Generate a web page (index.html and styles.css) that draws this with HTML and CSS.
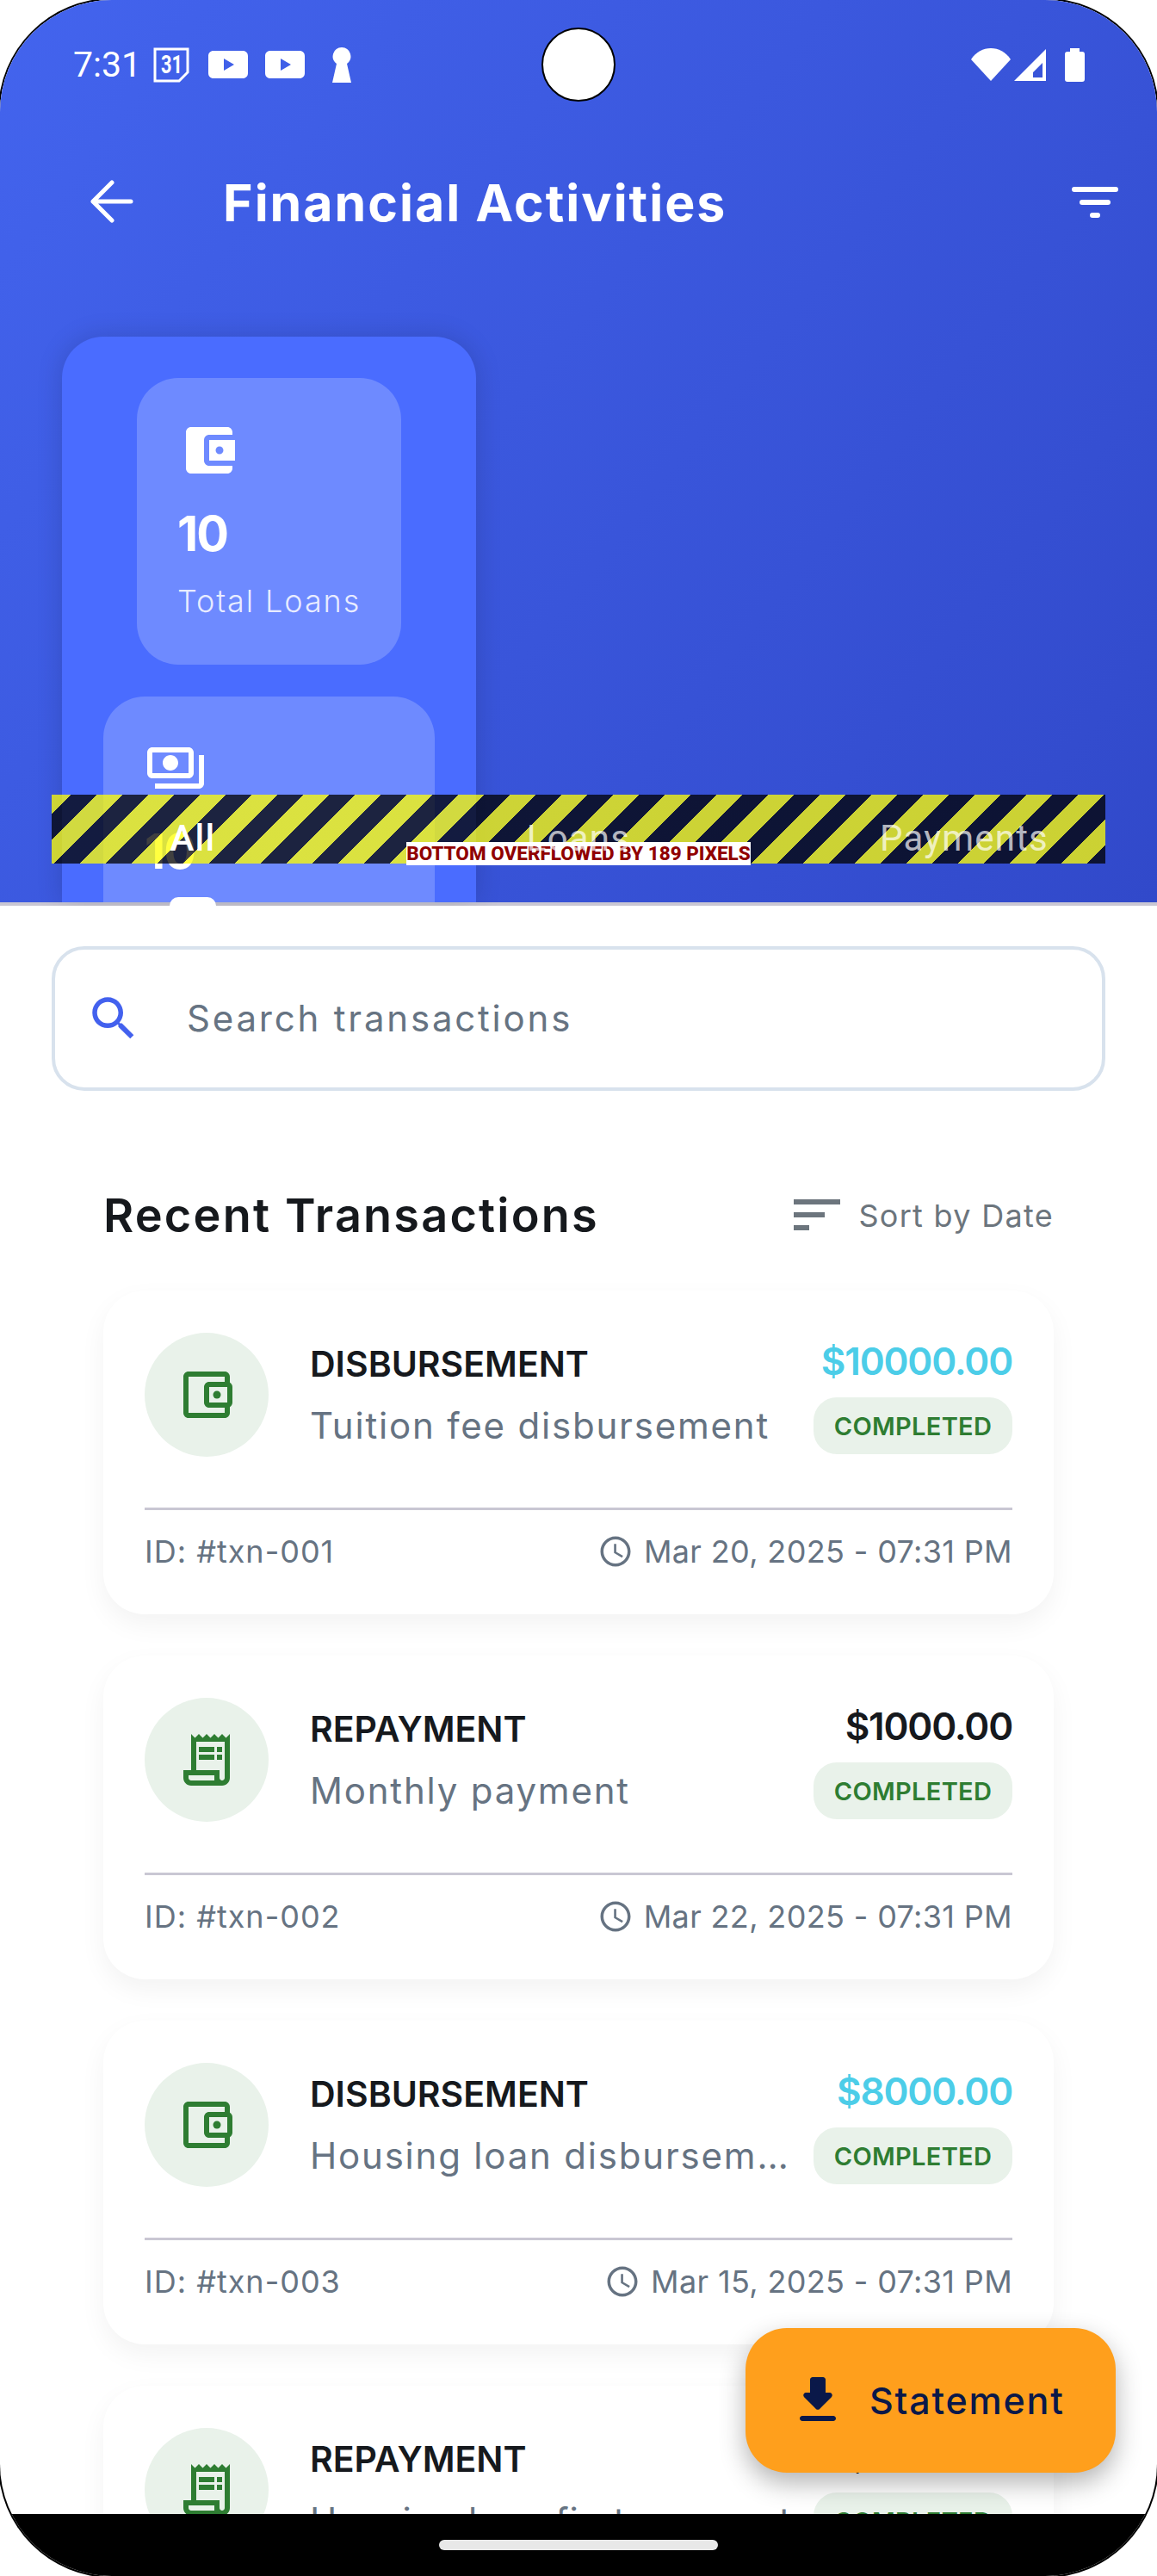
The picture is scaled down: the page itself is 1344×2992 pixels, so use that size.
FILE: index.html
```html
<!DOCTYPE html>
<html lang="en">
<head>
    <meta charset="UTF-8">
    <meta name="viewport" content="width=device-width, initial-scale=1.0">
    <title>Financial Activities</title>
    <link rel="stylesheet" href="styles.css">
</head>
<body>

<svg class="defs" width="0" height="0">
    <symbol id="i-wallet" viewBox="0 0 24 24">
        <path d="M21 7.28V5c0-1.1-.9-2-2-2H5c-1.11 0-2 .9-2 2v14c0 1.1.89 2 2 2h14c1.1 0 2-.9 2-2v-2.28c.59-.35 1-.98 1-1.72V9c0-.74-.41-1.37-1-1.72zM20 9v6h-7V9h7zM5 19V5h14v2h-6c-1.1 0-2 .9-2 2v6c0 1.1.9 2 2 2h6v2H5z"/>
        <circle cx="16" cy="12" r="1.5"/>
    </symbol>
    <symbol id="i-receipt" viewBox="0 0 24 24">
        <path d="M19.5 3.5 18 2l-1.5 1.5L15 2l-1.5 1.5L12 2l-1.5 1.5L9 2 7.5 3.5 6 2v14H3v3c0 1.66 1.34 3 3 3h12c1.66 0 3-1.34 3-3V2l-1.5 1.5zM15 20H6c-.55 0-1-.45-1-1v-1h10v2zm4-1c0 .55-.45 1-1 1s-1-.45-1-1v-3H8V5h11v14z"/>
        <path d="M9 7h6v2H9zM16 7h2v2h-2zM9 10h6v2H9zM16 10h2v2h-2z"/>
    </symbol>
    <symbol id="i-clock" viewBox="0 0 24 24">
        <path d="M11.99 2C6.47 2 2 6.48 2 12s4.47 10 9.99 10C17.52 22 22 17.52 22 12S17.52 2 11.99 2zM12 20c-4.42 0-8-3.58-8-8s3.58-8 8-8 8 3.58 8 8-3.58 8-8 8z"/>
        <path d="M12.5 7H11v6l5.25 3.15.75-1.23-4.5-2.67z"/>
    </symbol>
    <symbol id="i-youtube" viewBox="0 0 46 32">
        <path fill-rule="evenodd" d="M6 0h34c3.5 0 6 2.5 6 6v20c0 3.500-2.500 6-6 6H6c-3.500 0-6-2.500-6-6V6c0-3.500 2.500-6 6-6zM18 9v14l12-7z"/>
    </symbol>
</svg>

<div class="phone">
    <header class="header">
        <div class="status-bar">
            <span class="clock">7:31</span>
            <svg class="ic-cal" width="42" height="41" viewBox="0 0 42 41">
                <path class="cal-line" d="M2 2h38v27l-10 10H2z"/>
                <text class="cal-text" x="9" y="30" textLength="25" lengthAdjust="spacingAndGlyphs">31</text>
            </svg>
            <svg class="ic-yt" width="46" height="32"><use href="#i-youtube"/></svg>
            <svg class="ic-yt" width="46" height="32"><use href="#i-youtube"/></svg>
            <svg class="ic-key" width="22" height="41" viewBox="0 0 22 41">
                <path d="M11 0a10.500 10.500 0 0 1 6 19l5 22H0l5-22a10.500 10.500 0 0 1 6-19z"/>
            </svg>
            <div class="status-right">
                <svg width="46" height="38" viewBox="0 0 46 38">
                    <path d="M0 13C6 4 14 0 23 0s17 4 23 13L23 38z"/>
                </svg>
                <svg class="ic-signal" width="37" height="37" viewBox="0 0 37 37">
                    <path fill-rule="evenodd" d="M37 0v37H0zM33 16 22 27v6h11z"/>
                </svg>
                <svg class="ic-batt" width="23" height="39" viewBox="0 0 23 39">
                    <path d="M6 0h11v4h3c2 0 3 1 3 3v29c0 2-1 3-3 3H3c-2 0-3-1-3-3V7c0-2 1-3 3-3h3z"/>
                </svg>
            </div>
        </div>

        <div class="toolbar">
            <svg class="back" width="72" height="72" viewBox="0 0 72 72">
                <path d="M58 35H14M36 13 14 35l22 22"/>
            </svg>
            <h1 class="title">Financial Activities</h1>
            <div class="filter">
                <span class="filter-a"></span>
                <span class="filter-b"></span>
                <span class="filter-c"></span>
            </div>
        </div>

        <section class="stats">
            <div class="stat stat-first">
                <svg class="stat-icon" width="72" height="72" viewBox="0 0 24 24">
                    <path d="M21 18v1c0 1.100-.9 2-2 2H5c-1.110 0-2-.9-2-2V5c0-1.100.89-2 2-2h14c1.100 0 2 .9 2 2v1h-9c-1.110 0-2 .9-2 2v8c0 1.100.89 2 2 2h9zm-9-2h10V8H12v8zm4-2.500c-.83 0-1.500-.67-1.500-1.500s.67-1.500 1.500-1.500 1.500.67 1.500 1.500-.67 1.500-1.500 1.500z"/>
                </svg>
                <div class="stat-num">10</div>
                <div class="stat-label">Total Loans</div>
            </div>
            <div class="stat stat-second">
                <svg class="stat-icon" width="72" height="72" viewBox="0 0 24 24">
                    <path d="M19 14V6c0-1.100-.9-2-2-2H3c-1.100 0-2 .9-2 2v8c0 1.100.9 2 2 2h14c1.100 0 2-.9 2-2zm-2 0H3V6h14v8zm-7-7c-1.660 0-3 1.340-3 3s1.340 3 3 3 3-1.340 3-3-1.340-3-3-3zm13 0v11c0 1.100-.9 2-2 2H4v-2h17V7h2z"/>
                </svg>
                <div class="stat-num">10</div>
                <div class="stat-pill"></div>
            </div>
        </section>

        <div class="overflow-bar">
            <div class="overflow-label">BOTTOM OVERFLOWED BY 189 PIXELS</div>
        </div>

        <nav class="tabs">
            <span class="tab tab-active">All</span>
            <span class="tab">Loans</span>
            <span class="tab">Payments</span>
        </nav>
    </header>

    <div class="search">
        <svg class="search-icon" width="66" height="66" viewBox="0 0 24 24">
            <path d="M15.500 14h-.79l-.28-.27C15.410 12.590 16 11.110 16 9.500 16 5.910 13.090 3 9.500 3S3 5.910 3 9.500 5.910 16 9.500 16c1.610 0 3.090-.59 4.230-1.570l.27.28v.79l5 4.990L20.490 19l-4.990-5zm-6 0C7.010 14 5 11.990 5 9.500S7.010 5 9.500 5 14 7.010 14 9.500 11.990 14 9.500 14z"/>
        </svg>
        <span class="search-text">Search transactions</span>
    </div>

    <div class="section-head">
        <h2 class="section-title">Recent Transactions</h2>
        <div class="sort">
            <svg class="sort-icon" width="72" height="72" viewBox="0 0 24 24">
                <path d="M3 18h6v-2H3v2zM3 6v2h18V6H3zm0 7h12v-2H3v2z"/>
            </svg>
            <span>Sort by Date</span>
        </div>
    </div>

    <main class="list">
        <article class="card">
            <div class="card-top">
                <div class="circle"><svg width="72" height="72"><use href="#i-wallet"/></svg></div>
                <div class="card-mid">
                    <div class="card-type">DISBURSEMENT</div>
                    <div class="card-desc">Tuition fee disbursement</div>
                </div>
                <div class="card-right">
                    <div class="amount teal">$10000.00</div>
                    <div class="badge">COMPLETED</div>
                </div>
            </div>
            <div class="card-foot">
                <span class="txn-id">ID: #txn-001</span>
                <span class="when"><svg width="42" height="42"><use href="#i-clock"/></svg>Mar 20, 2025 - 07:31 PM</span>
            </div>
        </article>

        <article class="card">
            <div class="card-top">
                <div class="circle"><svg width="72" height="72"><use href="#i-receipt"/></svg></div>
                <div class="card-mid">
                    <div class="card-type">REPAYMENT</div>
                    <div class="card-desc">Monthly payment</div>
                </div>
                <div class="card-right">
                    <div class="amount">$1000.00</div>
                    <div class="badge">COMPLETED</div>
                </div>
            </div>
            <div class="card-foot">
                <span class="txn-id">ID: #txn-002</span>
                <span class="when"><svg width="42" height="42"><use href="#i-clock"/></svg>Mar 22, 2025 - 07:31 PM</span>
            </div>
        </article>

        <article class="card">
            <div class="card-top">
                <div class="circle"><svg width="72" height="72"><use href="#i-wallet"/></svg></div>
                <div class="card-mid">
                    <div class="card-type">DISBURSEMENT</div>
                    <div class="card-desc">Housing loan disbursement</div>
                </div>
                <div class="card-right">
                    <div class="amount teal">$8000.00</div>
                    <div class="badge">COMPLETED</div>
                </div>
            </div>
            <div class="card-foot">
                <span class="txn-id">ID: #txn-003</span>
                <span class="when"><svg width="42" height="42"><use href="#i-clock"/></svg>Mar 15, 2025 - 07:31 PM</span>
            </div>
        </article>

        <article class="card">
            <div class="card-top">
                <div class="circle"><svg width="72" height="72"><use href="#i-receipt"/></svg></div>
                <div class="card-mid">
                    <div class="card-type">REPAYMENT</div>
                    <div class="card-desc card-desc-tight">Housing loan first payment</div>
                </div>
                <div class="card-right">
                    <div class="amount">$1000.00</div>
                    <div class="badge">COMPLETED</div>
                </div>
            </div>
        </article>
    </main>

    <button class="fab">
        <svg width="72" height="72" viewBox="0 0 24 24">
            <path d="M16.590 9H15V4c0-.55-.45-1-1-1h-4c-.55 0-1 .45-1 1v5H7.410c-.89 0-1.340 1.080-.71 1.710l4.590 4.590c.39.39 1.020.39 1.410 0l4.590-4.590c.63-.63.19-1.710-.7-1.710zM5 19c0 .55.45 1 1 1h12c.55 0 1-.45 1-1s-.45-1-1-1H6c-.55 0-1 .45-1 1z"/>
        </svg>
        Statement
    </button>

    <div class="camera"></div>
    <div class="nav-bar"><span class="home"></span></div>
</div>

</body>
</html>
```

FILE: styles.css
```css
html, body {
    margin: 0;
    padding: 0;
    background: #fff;
}
body {
    width: 1344px;
    height: 2992px;
    overflow: hidden;
    font-family: Inter, "Liberation Sans", sans-serif;
}
.defs {
    position: absolute;
}
.phone {
    position: relative;
    width: 1344px;
    height: 2992px;
    border-radius: 130px;
    overflow: hidden;
    background: #fff;
    box-shadow: 0 0 0 2px #000;
}

/* header */
.header {
    position: relative;
    height: 1052px;
    overflow: hidden;
    background: linear-gradient(128deg, #4364ee, #3149ca) top / 100% 1048px no-repeat, #c9c7d3;
}
.status-bar {
    display: flex;
    align-items: center;
    height: 150px;
    padding: 0 84px 0 85px;
    box-sizing: border-box;
    color: #fff;
    fill: #fff;
}
.clock {
    font-family: Roboto, sans-serif;
    font-size: 41px;
    width: 93px;
}
.ic-yt {
    margin-left: 22px;
}
.ic-yt + .ic-yt {
    margin-left: 20px;
}
.ic-key {
    margin-left: 32px;
}
.cal-line {
    fill: none;
    stroke: #fff;
    stroke-width: 3;
}
.cal-text {
    font-family: Roboto, sans-serif;
    font-weight: 700;
    font-size: 30px;
    fill: #fff;
}
.status-right {
    display: flex;
    align-items: center;
    gap: 4px;
    margin-left: auto;
}
.ic-batt {
    margin-left: 18px;
}
.toolbar {
    display: flex;
    align-items: center;
    height: 170px;
    padding: 0 36px 0 94px;
    color: #fff;
}
.back {
    fill: none;
    stroke: #fff;
    stroke-width: 5;
    stroke-linecap: round;
    stroke-linejoin: round;
}
.title {
    margin: 0 0 0 93px;
    font-size: 59px;
    font-weight: 700;
    letter-spacing: 2px;
    white-space: nowrap;
}
.filter {
    display: flex;
    flex-direction: column;
    align-items: center;
    gap: 9px;
    width: 72px;
    margin-left: auto;
}
.filter span {
    height: 6px;
    border-radius: 3px;
    background: #fff;
}
.filter-a { width: 54px; }
.filter-b { width: 36px; }
.filter-c { width: 12px; }

/* stat panel, runs off the bottom of the header */
.stats {
    display: flex;
    flex-direction: column;
    align-items: center;
    gap: 37px;
    width: 481px;
    height: 657px;
    margin: 71px 0 0 72px;
    padding-top: 48px;
    box-sizing: border-box;
    border-radius: 48px 48px 0 0;
    background: #4a6cff;
    box-shadow: 0 0 30px rgba(0, 0, 0, .15);
}
.stat {
    flex: none;
    box-sizing: border-box;
    border-radius: 48px;
    background: #6e8aff;
    color: #fff;
    fill: #fff;
}
.stat-first {
    width: 307px;
    height: 333px;
    padding: 48px 0 0 47px;
}
.stat-first .stat-icon {
    margin-left: 1px;
}
.stat-second {
    width: 385px;
    height: 239px;
    padding: 47px 0 0 48px;
    border-radius: 48px 48px 0 0;
}
.stat-icon {
    display: block;
}
.stat-num {
    margin-top: 25px;
    font-size: 56px;
    font-weight: 700;
    letter-spacing: -2px;
    line-height: 72px;
}
.stat-label {
    margin-top: 18px;
    font-size: 36px;
    font-weight: 300;
    letter-spacing: 1.900px;
    line-height: 48px;
    color: rgba(255, 255, 255, .85);
    white-space: nowrap;
}
.stat-pill {
    width: 54px;
    height: 24px;
    margin: 17px 0 0 29px;
    border-radius: 10px 10px 0 0;
    background: #fff;
}

/* debug stripes */
.overflow-bar {
    position: absolute;
    left: 60px;
    top: 923px;
    width: 1224px;
    height: 80px;
    background: repeating-linear-gradient(135deg, rgba(255, 255, 0, .75) 0 15.56px, rgba(0, 0, 0, .75) 15.56px 36.77px, rgba(255, 255, 0, .75) 36.77px 42.43px);
}
.overflow-label {
    position: absolute;
    left: 412px;
    top: 55px;
    width: 400px;
    height: 27px;
    background: #fff;
    color: #900000;
    font-family: Roboto, sans-serif;
    font-size: 22.500px;
    font-weight: 800;
    line-height: 27px;
    text-align: center;
    white-space: nowrap;
}
.tabs {
    position: absolute;
    left: 0;
    top: 944px;
    width: 1344px;
    display: grid;
    grid-template-columns: repeat(3, 1fr);
    font-family: Roboto, sans-serif;
    font-size: 42px;
    letter-spacing: 1.200px;
    line-height: 60px;
    text-align: center;
    color: rgba(255, 255, 255, .7);
}
.tab-active {
    color: #fff;
    font-weight: 500;
}

/* search */
.search {
    display: flex;
    align-items: center;
    height: 168px;
    margin: 47px 60px 0;
    padding-left: 35px;
    box-sizing: border-box;
    border: 4px solid #d8e2ed;
    border-radius: 38px;
}
.search-icon {
    flex: none;
    fill: #4361ee;
}
.search-text {
    margin-left: 52px;
    padding-bottom: 2px;
    font-size: 42px;
    letter-spacing: 2.800px;
    color: #667382;
}

/* list */
.section-head {
    display: flex;
    align-items: center;
    justify-content: space-between;
    height: 84px;
    margin: 102px 120px 46px;
}
.section-title {
    margin: 0;
    font-size: 54px;
    font-weight: 600;
    color: #16191d;
    letter-spacing: 2.200px;
}
.sort {
    display: flex;
    align-items: center;
    gap: 12px;
    font-size: 36px;
    letter-spacing: 1.300px;
    color: #6c757d;
    fill: #6c757d;
}
.sort span {
    padding-top: 2px;
}
.list {
    display: flex;
    flex-direction: column;
    gap: 48px;
    margin: 0 120px;
}
.card {
    flex: none;
    height: 376px;
    padding: 49px 48px 0;
    box-sizing: border-box;
    border-radius: 48px;
    background: #fff;
    box-shadow: 0 12px 30px rgba(0, 0, 0, .05);
}
.card-top {
    display: flex;
    height: 206px;
    box-sizing: border-box;
    border-bottom: 3px solid #c9c7d3;
}
.circle {
    flex: none;
    display: flex;
    align-items: center;
    justify-content: center;
    width: 144px;
    height: 144px;
    border-radius: 50%;
    background: #e9f2ea;
    fill: #2e7d32;
}
.card-mid {
    flex: 1;
    min-width: 0;
    margin-left: 48px;
}
.card-type {
    font-size: 41px;
    font-weight: 600;
    line-height: 72px;
    color: #16191d;
}
.card-desc {
    font-size: 42px;
    letter-spacing: 1.800px;
    line-height: 72px;
    color: #667382;
    white-space: nowrap;
    overflow: hidden;
    text-overflow: ellipsis;
}
.card-desc-tight {
    letter-spacing: 1px;
}
.card-right {
    flex: none;
    display: flex;
    flex-direction: column;
    align-items: flex-end;
    margin-left: 8px;
}
.amount {
    font-size: 44px;
    font-weight: 600;
    letter-spacing: -1.200px;
    line-height: 66px;
    color: #16191d;
}
.teal {
    color: #4ccde8;
}
.badge {
    display: flex;
    align-items: center;
    justify-content: center;
    width: 231px;
    height: 66px;
    margin-top: 9px;
    border-radius: 27px;
    background: #e9f2ea;
    color: #2e7d32;
    font-size: 29px;
    font-weight: 600;
    letter-spacing: .3px;
}
.card-foot {
    display: flex;
    align-items: center;
    justify-content: space-between;
    height: 96px;
    font-size: 36px;
    color: #667382;
}
.txn-id {
    letter-spacing: 1px;
}
.when {
    display: flex;
    align-items: center;
    gap: 12px;
    letter-spacing: .35px;
    fill: #667382;
}

/* overlays */
.fab {
    position: absolute;
    left: 866px;
    top: 2704px;
    display: flex;
    align-items: center;
    gap: 24px;
    width: 430px;
    height: 168px;
    padding: 0 0 0 48px;
    box-sizing: border-box;
    border: none;
    border-radius: 48px;
    background: #ff9f1c;
    color: #0a1849;
    fill: #0a1849;
    font-family: Inter, sans-serif;
    font-size: 43px;
    font-weight: 500;
    letter-spacing: 1.800px;
    box-shadow: 0 12px 30px rgba(0, 0, 0, .3);
}
.camera {
    position: absolute;
    left: 629px;
    top: 32px;
    width: 86px;
    height: 86px;
    box-sizing: border-box;
    border: 2px solid #000;
    border-radius: 50%;
    background: #fff;
}
.nav-bar {
    position: absolute;
    left: 0;
    right: 0;
    bottom: 0;
    display: flex;
    justify-content: center;
    height: 72px;
    background: #000;
}
.home {
    width: 324px;
    height: 12px;
    margin-top: 30px;
    border-radius: 6px;
    background: #e8e8e8;
}
```
